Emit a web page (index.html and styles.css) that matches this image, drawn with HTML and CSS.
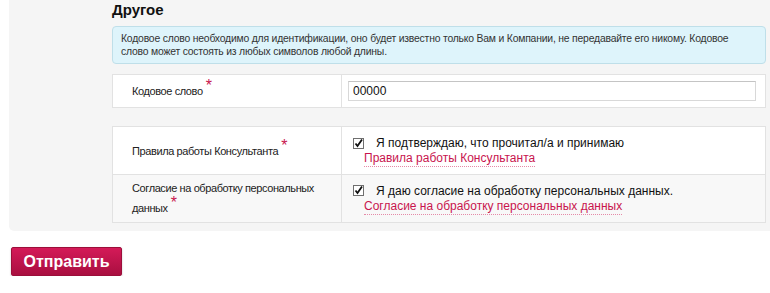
FILE: index.html
```html
<!DOCTYPE html>
<html lang="ru">

<head>
    <meta charset="UTF-8">
    <title>Другое</title>
    <link rel="stylesheet" href="styles.css">
</head>

<body>
    <div class="panel">
        <h2>Другое</h2>
        <div class="info">
            Кодовое слово необходимо для идентификации, оно будет известно только Вам и Компании, не передавайте его никому. Кодовое слово может состоять из любых символов любой длины.
        </div>

        <table class="form-table">
            <tr>
                <td class="label">Кодовое слово<span class="req">*</span></td>
                <td class="field"><input type="text" class="text-input" value="00000"></td>
            </tr>
        </table>

        <table class="form-table agree">
            <tr>
                <td class="label">Правила работы Консультанта<span class="req">*</span></td>
                <td class="field">
                    <label class="check">
                        <span class="box"><svg width="11" height="11" viewBox="0 0 11 11"><path d="M2.5 5.5 L4.5 8 L9 1.5" fill="none" stroke="#111" stroke-width="1.8"/></svg></span>
                        Я подтверждаю, что прочитал/а и принимаю
                    </label>
                    <a href="#" class="doc-link">Правила работы Консультанта</a>
                </td>
            </tr>
            <tr class="alt">
                <td class="label">Согласие на обработку персональных данных<span class="req">*</span></td>
                <td class="field">
                    <label class="check">
                        <span class="box"><svg width="11" height="11" viewBox="0 0 11 11"><path d="M2.5 5.5 L4.5 8 L9 1.5" fill="none" stroke="#111" stroke-width="1.8"/></svg></span>
                        Я даю согласие на обработку персональных данных.
                    </label>
                    <a href="#" class="doc-link">Согласие на обработку персональных данных</a>
                </td>
            </tr>
        </table>
    </div>

    <button class="submit-btn">Отправить</button>
</body>

</html>
```

FILE: styles.css
```css
body {
    margin: 0;
    font-family: "Liberation Sans", Arial, sans-serif;
    background: #ffffff;
    color: #222;
}

.panel {
    margin-left: 9px;
    padding: 1px 4px 8px 103px;
    background: #f5f5f5;
    border-radius: 0 0 0 5px;
}

.panel h2 {
    margin: 0 0 8px 0;
    font-size: 15px;
    line-height: 17px;
    font-weight: bold;
    color: #111;
}

.info {
    padding: 5px 8px;
    background: #def4fb;
    border: 1px solid #bfdfe9;
    border-radius: 4px;
    font-size: 10.4px;
    letter-spacing: -0.2px;
    line-height: 13px;
    color: #333;
}

.form-table {
    width: 100%;
    margin-top: 10px;
    border-collapse: collapse;
    background: #fff;
}

.form-table.agree {
    margin-top: 18px;
}

.form-table td {
    border: 1px solid #e2e2e2;
    vertical-align: middle;
}

.form-table tr.alt td {
    background: #f8f8f8;
}

.label {
    width: 199px;
    padding: 4px 10px 4px 19px;
    font-size: 11px;
    letter-spacing: -0.4px;
    line-height: 19px;
    color: #222;
}

.req {
    display: inline-block;
    margin-left: 3px;
    color: #c8154e;
    font-size: 16px;
    line-height: 10px;
    vertical-align: 4px;
}

.field {
    padding: 6px 9px 6px 6px;
    font-size: 12px;
    line-height: 16px;
}

.text-input {
    display: block;
    box-sizing: border-box;
    width: 100%;
    height: 20px;
    padding: 1px 4px;
    border: 1px solid #d8d8d8;
    border-top-color: #c4c4c4;
    font-family: "Liberation Sans", Arial, sans-serif;
    font-size: 12px;
    color: #111;
}

.agree .field {
    padding: 8px 9px 7px 6px;
}

.agree .alt .field {
    padding: 7px 9px 7px 6px;
}

.check {
    display: flex;
    align-items: center;
    gap: 12px;
    padding-left: 5px;
    font-size: 12px;
    line-height: 16px;
    color: #111;
}

.box {
    display: flex;
    width: 11px;
    height: 11px;
    box-sizing: border-box;
    border: 1px solid #6f6f6f;
    background: #fff;
    align-items: center;
    justify-content: center;
}

.box svg {
    display: block;
    flex: none;
}

.doc-link {
    display: inline-block;
    margin-left: 16px;
    font-size: 12px;
    line-height: 15px;
    color: #c8154e;
    text-decoration: none;
    border-bottom: 1px dotted #e58aa8;
    vertical-align: top;
}

.submit-btn {
    display: block;
    margin: 16px 0 0 11px;
    width: 111px;
    height: 29px;
    border: 1px solid #9c0e3a;
    border-radius: 2px;
    background: linear-gradient(to bottom, #d41a58, #a90f40);
    color: #fff;
    font-family: "Liberation Sans", Arial, sans-serif;
    font-size: 16px;
    font-weight: bold;
    box-shadow: 0 1px 2px rgba(0, 0, 0, 0.25);
    cursor: pointer;
}
```
